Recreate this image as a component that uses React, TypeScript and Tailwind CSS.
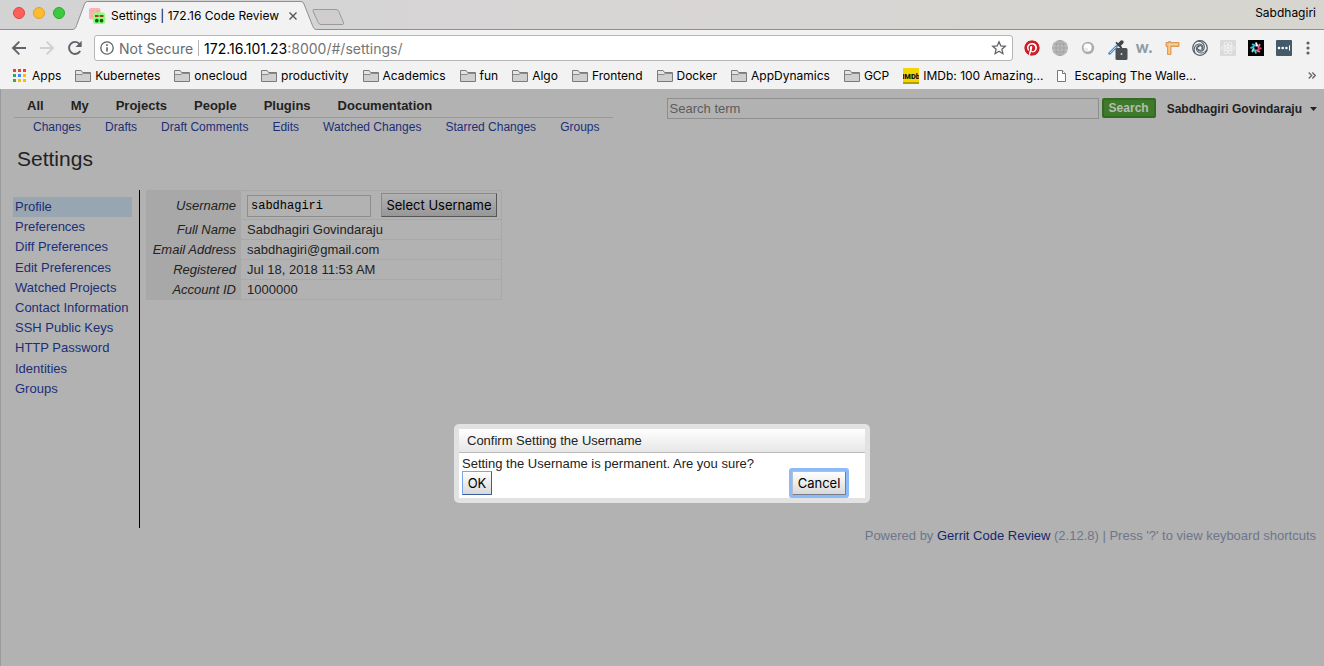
import type { ReactNode } from "react";
import { FaPinterest, FaReact } from "react-icons/fa";

const folders = [
  "Kubernetes",
  "onecloud",
  "productivity",
  "Academics",
  "fun",
  "Algo",
  "Frontend",
  "Docker",
  "AppDynamics",
  "GCP",
];

const mainMenu = ["All", "My", "Projects", "People", "Plugins", "Documentation"];

const subMenu = [
  "Changes",
  "Drafts",
  "Draft Comments",
  "Edits",
  "Watched Changes",
  "Starred Changes",
  "Groups",
];

const settingsMenu = [
  "Profile",
  "Preferences",
  "Diff Preferences",
  "Edit Preferences",
  "Watched Projects",
  "Contact Information",
  "SSH Public Keys",
  "HTTP Password",
  "Identities",
  "Groups",
];

const accountRows = [
  ["Full Name", "Sabdhagiri Govindaraju"],
  ["Email Address", "sabdhagiri@gmail.com"],
  ["Registered", "Jul 18, 2018 11:53 AM"],
  ["Account ID", "1000000"],
];

function FolderIcon() {
  return (
    <svg className="h-4 w-4 shrink-0" viewBox="0 0 16 16" aria-hidden="true">
      <path d="M.5 13.5v-11h5.6l1.4 2h8v9z" fill="#e4e4e4" stroke="#7b7b7b" />
      <path d="M1 6.5h6l1-1h7v7.500H1z" fill="#cfcfcf" />
      <path d="M1 6.500h6l1.200-1h6.800" fill="none" stroke="#8a8a8a" />
    </svg>
  );
}

function AppsIcon() {
  const colors = [
    "#ea4335", "#ea4335", "#ea4335",
    "#34a853", "#4285f4", "#fbbc05",
    "#34a853", "#fbbc05", "#fbbc05",
  ];
  return (
    <svg className="h-[13px] w-[13px] shrink-0" viewBox="0 0 13 13" aria-hidden="true">
      {colors.map((c, i) => (
        <rect key={i} x={(i % 3) * 5} y={Math.floor(i / 3) * 5} width="3" height="3" fill={c} />
      ))}
    </svg>
  );
}

function GerritIcon() {
  return (
    <svg className="h-4 w-4 shrink-0" viewBox="0 0 16 16" aria-hidden="true">
      <rect x="0" y="0" width="11.500" height="11.500" rx="2" fill="#fbb4b4" />
      <path d="M2 3h3M7 3h3M2 8h2" stroke="#f8a4a4" strokeWidth="1.500" />
      <rect x="4" y="4.500" width="12" height="11.500" rx="2" fill="#8dff7c" />
      <path d="M6 8h3.500M10.700 8h3.800" stroke="#a80000" strokeWidth="1.700" />
      <circle cx="7.800" cy="12.700" r="1.900" fill="#0a6a0a" />
      <circle cx="12.500" cy="12.700" r="1.900" fill="#0a6a0a" />
    </svg>
  );
}

function Arrow({ flip, color }: { flip?: boolean; color: string }) {
  return (
    <svg
      className={flip ? "h-4 w-4 rotate-180" : "h-4 w-4"}
      viewBox="0 0 16 16"
      fill="none"
      stroke={color}
      strokeWidth="1.900"
      aria-hidden="true"
    >
      <path d="M15 8H2.500M8.300 1.700L2 8l6.300 6.300" />
    </svg>
  );
}

function ReloadIcon() {
  return (
    <svg className="h-4 w-4" viewBox="0 0 16 16" aria-hidden="true">
      <path d="M13.200 11a6 6 0 1 1-.6-7" fill="none" stroke="#5f6368" strokeWidth="1.900" />
      <path d="M14.700.8v6.200H8.500z" fill="#5f6368" />
    </svg>
  );
}

function Icon({ children }: { children: ReactNode }) {
  return (
    <svg className="h-4 w-4 overflow-visible" viewBox="0 0 16 16" fill="none" aria-hidden="true">
      {children}
    </svg>
  );
}

function ToolButton({ label, children }: { label: string; children: ReactNode }) {
  return (
    <button type="button" aria-label={label} className="flex h-4 w-4 items-center justify-center">
      {children}
    </button>
  );
}

function Extensions() {
  return (
    <div className="flex shrink-0 items-center gap-3">
      <ToolButton label="Pinterest">
        <FaPinterest className="h-4 w-4 rounded-full bg-white text-[#cb2027]" />
      </ToolButton>
      <ToolButton label="Globe">
        <Icon>
          <circle cx="8" cy="8" r="8" fill="#bcbcbc" />
          <path d="M0 8h16M1.500 4h13M1.500 12h13M8 0v16" stroke="#a3a3a3" />
          <ellipse cx="8" cy="8" rx="4" ry="7.700" stroke="#a3a3a3" />
        </Icon>
      </ToolButton>
      <ToolButton label="Bubble">
        <Icon>
          <circle cx="8" cy="8" r="6.200" fill="#adadad" />
          <circle cx="7.600" cy="7.600" r="4" fill="#fff" />
          <circle cx="6" cy="9.500" r="2" fill="#e9e9e9" />
        </Icon>
      </ToolButton>
      <ToolButton label="Colour picker">
        <Icon>
          <path d="M1.500 13.500L9 6" stroke="#4b94d3" strokeWidth="2.600" strokeLinecap="round" />
          <path d="M2 13l6-6" stroke="#a9d3f4" />
          <path d="M8.500 2.800l4.700 4.700" stroke="#444" strokeWidth="1.800" strokeLinecap="round" />
          <path d="M11.500 4.500l2.300-2.300" stroke="#444" strokeWidth="3.800" strokeLinecap="round" />
          <rect x="7.500" y="8" width="12" height="12" rx="1.500" fill="#4d4f53" />
          <circle cx="13.500" cy="14" r="1" fill="#b8dcff" />
        </Icon>
      </ToolButton>
      <ToolButton label="Wikiwand">
        <span className="pb-[2px] font-[Lato,sans-serif] text-[16px] leading-4 font-black text-[#8c9ba6]">w.</span>
      </ToolButton>
      <ToolButton label="Ruler">
        <Icon>
          <path d="M2 2.500h2.500V1.500h2v1H15v4H7v8H3.500v-8H2z" fill="#f3b469" stroke="#d08f45" strokeWidth=".8" />
          <path d="M3.500 4.300H14M5.200 5v9" stroke="#fbd9a8" />
        </Icon>
      </ToolButton>
      <ToolButton label="Swirl">
        <Icon>
          <circle cx="8" cy="8" r="7.300" stroke="#4f5d6b" strokeWidth="1.200" />
          {[0, 120, 240].map((a) => (
            <path
              key={a}
              d="M6 1C11 1.500 13.500 5.500 12 9C10.700 12 6.500 12 5.600 9C5.200 7.300 6.500 6 8 6"
              transform={`rotate(${a} 8 8)`}
              stroke="#4f5d6b"
              strokeWidth="1.100"
            />
          ))}
        </Icon>
      </ToolButton>
      <ToolButton label="React">
        <span className="flex h-4 w-4 items-center justify-center bg-[#dadada]">
          <FaReact className="h-[14px] w-[14px] text-[#f8f8f8]" />
        </span>
      </ToolButton>
      <ToolButton label="Burst">
        <Icon>
          <rect width="16" height="16" fill="#000" />
          {["#fff", "#f0679e", "#e8336d", "#f0679e", "#3fd0c9", "#8fe3ee", "#3fb9e8", "#35c9d6"].map((c, i) => (
            <path
              key={i}
              d="M9 5.600L8.200 3.200"
              transform={`rotate(${i * 45} 8 8)`}
              stroke={c}
              strokeWidth="2"
              strokeLinecap="round"
            />
          ))}
        </Icon>
      </ToolButton>
      <ToolButton label="Password filler">
        <Icon>
          <rect width="16" height="16" rx="1" fill="#455a68" />
          <circle cx="3" cy="8" r="1.300" fill="#fff" />
          <circle cx="6.700" cy="8" r="1.300" fill="#fff" />
          <circle cx="10.400" cy="8" r="1.300" fill="#fff" />
          <path d="M13.500 5.300v5.400" stroke="#fff" />
        </Icon>
      </ToolButton>
      <button type="button" aria-label="Menu" className="flex h-4 w-2 justify-center">
        <svg className="h-4 w-1" viewBox="0 0 4 16" fill="#5f6368" aria-hidden="true">
          <circle cx="2" cy="3" r="1.600" />
          <circle cx="2" cy="8" r="1.600" />
          <circle cx="2" cy="13" r="1.600" />
        </svg>
      </button>
    </div>
  );
}

function BrowserChrome() {
  return (
    <header className="font-[Inter,sans-serif] text-[12px] text-black">
      <div className="relative flex h-[30px] items-center border-b border-[#8f8f8f] bg-linear-to-r from-[#d3d3d3] via-[#d8d5d5] to-[#d6d5cf]">
        <svg
          className="absolute top-0 left-[72px] h-[30px] w-[280px]"
          viewBox="0 0 280 30"
          aria-hidden="true"
        >
          <path d="M0 30V29.500C3 29.500 3.500 28 4.500 25.500L12.500 4Q13.500 1.500 15.500 1.500H229Q231 1.500 232 4L240.500 25.500C241.500 28 242 29.500 245 29.500V30z" fill="#f2f2f2" />
          <path d="M0 29.500C3 29.500 3.500 28 4.500 25.500L12.500 4Q13.500 1.500 15.500 1.500H229Q231 1.500 232 4L240.500 25.500C241.500 28 242 29.500 245 29.500" fill="none" stroke="#8f8f8f" />
          <path d="M242 9.500h22q2 0 2.800 2l4.700 11q.8 2-1.500 2h-21q-2 0-2.800-2l-5-11q-.8-2 .8-2z" fill="#cfcdcd" stroke="#9a9a9a" />
        </svg>
        <div className="mb-1 ml-[13px] flex gap-2">
          <span className="h-3 w-3 rounded-full border border-[#e2463f] bg-[#fc605b]" />
          <span className="h-3 w-3 rounded-full border border-[#e0a123] bg-[#fdbc2f]" />
          <span className="h-3 w-3 rounded-full border border-[#2aa831] bg-[#3bc93f]" />
        </div>
        <div className="relative ml-6 flex items-center gap-[6px] pt-[2px]">
          <GerritIcon />
          <span className="whitespace-nowrap">Settings | 172.16 Code Review</span>
          <button type="button" aria-label="Close tab" className="ml-1">
            <svg className="h-2 w-2" viewBox="0 0 8 8" stroke="#555" strokeWidth="1.400" aria-hidden="true">
              <path d="M.5.5l7 7M7.500.5l-7 7" />
            </svg>
          </button>
        </div>
        <span className="mr-2 mb-1 ml-auto">Sabdhagiri</span>
      </div>

      <div className="flex h-9 items-center bg-[#f2f2f2] pr-3 pl-[11px]">
        <div className="flex gap-3">
          <ToolButton label="Back"><Arrow color="#5f6368" /></ToolButton>
          <ToolButton label="Forward"><Arrow flip color="#d0d0d0" /></ToolButton>
          <ToolButton label="Reload"><ReloadIcon /></ToolButton>
        </div>
        <div className="mr-[11px] ml-[11px] flex h-[26px] flex-1 items-center rounded-[3px] border border-[#b5b5b5] bg-white px-[5px] text-[14px]">
          <svg className="h-[14px] w-[14px]" viewBox="0 0 14 14" aria-hidden="true">
            <circle cx="7" cy="7" r="6.200" fill="none" stroke="#5f6368" strokeWidth="1.300" />
            <path d="M7 6.200v4.300M7 3.300v1.600" stroke="#5f6368" strokeWidth="1.600" />
          </svg>
          <span className="ml-[5px] whitespace-nowrap text-[#666b70]">Not Secure</span>
          <span className="mx-[5px] h-4 w-px bg-[#b5b5b5]" />
          <span className="flex-1 whitespace-nowrap">
            172.16.101.23<span className="text-[#757575]">:8000/#/settings/</span>
          </span>
          <button type="button" aria-label="Bookmark this page">
            <svg className="h-4 w-4" viewBox="0 0 16 16" fill="none" stroke="#5f6368" strokeWidth="1.300" aria-hidden="true">
              <path d="M8 1.800l1.800 4.100 4.500.4-3.400 3 1 4.400L8 11.300l-3.900 2.400 1-4.400-3.400-3 4.500-.4z" />
            </svg>
          </button>
        </div>
        <Extensions />
      </div>

      <nav aria-label="Bookmarks" className="flex h-[23px] items-center gap-[14px] bg-[#f2f2f2] pr-2 pb-1 pl-[13px] whitespace-nowrap">
        <a href="#apps" className="flex items-center gap-[6px]">
          <AppsIcon />
          Apps
        </a>
        {folders.map((name) => (
          <a key={name} href={`#${name}`} className="flex items-center gap-1">
            <FolderIcon />
            {name}
          </a>
        ))}
        <a href="#imdb" className="flex items-center gap-1">
          <svg className="h-4 w-4 shrink-0" viewBox="0 0 16 16" aria-hidden="true">
            <rect width="16" height="16" fill="#b99a00" />
            <rect width="16" height="14" fill="#f2d600" />
            <text x="8" y="11" textAnchor="middle" fontFamily="Roboto, sans-serif" fontWeight="900" fontSize="7.500" fill="#111">IMDb</text>
          </svg>
          IMDb: 100 Amazing...
        </a>
        <a href="#escaping" className="flex items-center gap-2">
          <svg className="h-3 w-[9px] shrink-0" viewBox="0 0 9 12" fill="#fff" stroke="#777" aria-hidden="true">
            <path d="M.5.5h5l3 3v8h-8z" />
            <path d="M5.500.5v3h3" />
          </svg>
          Escaping The Walle...
        </a>
        <button type="button" aria-label="More bookmarks" className="ml-auto">
          <svg className="h-[7px] w-2" viewBox="0 0 8 7" fill="none" stroke="#666" strokeWidth="1.300" aria-hidden="true">
            <path d="M.7.5l3 3-3 3M4.300.5l3 3-3 3" />
          </svg>
        </button>
      </nav>
    </header>
  );
}

function TopBar() {
  return (
    <div className="flex items-start justify-between pt-2">
      <div className="ml-[13px]">
        <nav aria-label="Main" className="flex h-[21px] gap-[27px] border-b border-[#999] pr-[181px] pl-[13px] text-[13px] leading-[17px] font-bold">
          {mainMenu.map((item) => (
            <a key={item} href={`#${item}`}>{item}</a>
          ))}
        </nav>
        <nav aria-label="Sections" className="flex gap-6 pt-px pl-[19px] text-[12px] leading-[17px] text-[#1b2f77]">
          {subMenu.map((item) => (
            <a key={item} href={`#${item}`}>{item}</a>
          ))}
        </nav>
      </div>
      <form className="flex h-[22px] items-center pr-[7px]">
        <input
          type="text"
          aria-label="Search term"
          placeholder="Search term"
          className="h-[21px] w-[432px] border border-[#8e8e8e] bg-transparent px-[2px] text-[13px] placeholder:text-[#5c5c5c]"
        />
        <button
          type="button"
          className="ml-[3px] h-5 rounded-[2px] border-2 border-[#336b22] bg-[#3f7a2c] px-[5px] text-[12px] leading-4 font-bold text-[#b5bfb1]"
        >
          Search
        </button>
        <a href="#account" className="ml-[11px] flex items-center gap-2 pt-[2px] text-[12px] font-bold">
          Sabdhagiri Govindaraju
          <svg className="h-1 w-[7px]" viewBox="0 0 7 4" aria-hidden="true">
            <path d="M0 0h7L3.500 4z" fill="#222" />
          </svg>
        </a>
      </form>
    </div>
  );
}

function AccountTable() {
  return (
    <table className="h-[110px] w-[356px] border-collapse leading-[17px]">
      <tbody>
        <tr className="h-[29px]">
          <th scope="row" className="w-[94px] border border-[#a8a8a8] bg-[#a8a8a8] pr-1 text-right font-normal italic">
            <label htmlFor="username">Username</label>
          </th>
          <td className="border border-[#a8a8a8] pl-[6px]">
            <div className="flex items-center gap-[10px]">
              <input
                id="username"
                type="text"
                defaultValue="sabdhagiri"
                className="mt-px h-[22px] w-[124px] border border-[#8e8e8e] bg-transparent px-[3px] font-['Liberation_Mono',monospace] text-[12px] text-black"
              />
              <button
                type="button"
                className="h-6 w-[116px] border border-t-[#8a8a8a] border-r-[#555] border-b-[#555] border-l-[#8a8a8a] bg-linear-to-b from-[#b2b2b2] to-[#979797] font-[Inter,sans-serif] text-[13px] leading-4 whitespace-nowrap text-black"
              >
                Select Username
              </button>
            </div>
          </td>
        </tr>
        {accountRows.map(([label, value]) => (
          <tr key={label} className="h-5">
            <th scope="row" className="border border-[#a8a8a8] bg-[#a8a8a8] pr-1 text-right font-normal italic">
              {label}
            </th>
            <td className="border border-[#a8a8a8] pl-[6px]">{value}</td>
          </tr>
        ))}
      </tbody>
    </table>
  );
}

function ConfirmDialog() {
  return (
    <div
      role="dialog"
      aria-modal="true"
      aria-labelledby="confirm-title"
      className="w-[416px] rounded-[5px] bg-[#e2e2e2] p-[5px]"
    >
      <h2
        id="confirm-title"
        className="h-6 border-b border-[#bbb] bg-linear-to-b from-white to-[#e6e6e6] px-2 leading-[23px]"
      >
        Confirm Setting the Username
      </h2>
      <div className="bg-white px-[3px] pt-[3px] pb-[3px]">
        <p className="leading-[15px]">Setting the Username is permanent. Are you sure?</p>
        <div className="flex justify-between pr-4 font-[Inter,sans-serif] text-black">
          <button
            type="button"
            className="h-6 w-[30px] border border-t-[#7ba6ee] border-r-[#3c5c9c] border-b-[#3c5c9c] border-l-[#7ba6ee] bg-linear-to-b from-white to-[#d9d9d9] leading-4"
          >
            OK
          </button>
          <button
            type="button"
            className="h-6 w-[54px] rounded-[1px] border border-t-[#b9bdd0] border-r-[#767c8c] border-b-[#767c8c] border-l-[#b9bdd0] bg-linear-to-b from-white to-[#d9d9d9] leading-4 ring-3 ring-[#8dbaf8]"
          >
            Cancel
          </button>
        </div>
      </div>
    </div>
  );
}

export default function App() {
  return (
    <div className="flex min-h-screen flex-col bg-[#b2b2b2]">
      <BrowserChrome />
      <div className="relative flex-1 border-l border-[#9b9b9b] font-['Liberation_Sans',Arial,sans-serif] text-[13px] text-[#222]">
        <TopBar />
        <h1 className="mt-[11px] ml-4 text-[21px] leading-6">Settings</h1>
        <main className="mt-[19px] flex min-h-[338px] items-stretch">
          <nav
            aria-label="Settings"
            className="w-[139px] border-r border-black pt-[7px] pr-[7px] pl-3 text-[#1b2f77]"
          >
            <ul className="grid h-[202px] grid-rows-10">
              {settingsMenu.map((item, i) => (
                <li key={item} className={i === 0 ? "bg-[#98a6b1] pl-[2px]" : "pl-[2px]"}>
                  <a href={`#${item}`} className="leading-5 whitespace-nowrap">{item}</a>
                </li>
              ))}
            </ul>
          </nav>
          <section aria-label="Profile" className="ml-[6px]">
            <AccountTable />
          </section>
        </main>
        <footer className="pr-2 text-right leading-4 text-[#6d768c]">
          Powered by <a href="#gerrit" className="text-[#14286e]">Gerrit Code Review</a> (2.12.8) | Press '?' to view
          keyboard shortcuts
        </footer>
        <div className="absolute top-[335px] right-0 -left-px flex justify-center">
          <ConfirmDialog />
        </div>
      </div>
    </div>
  );
}
